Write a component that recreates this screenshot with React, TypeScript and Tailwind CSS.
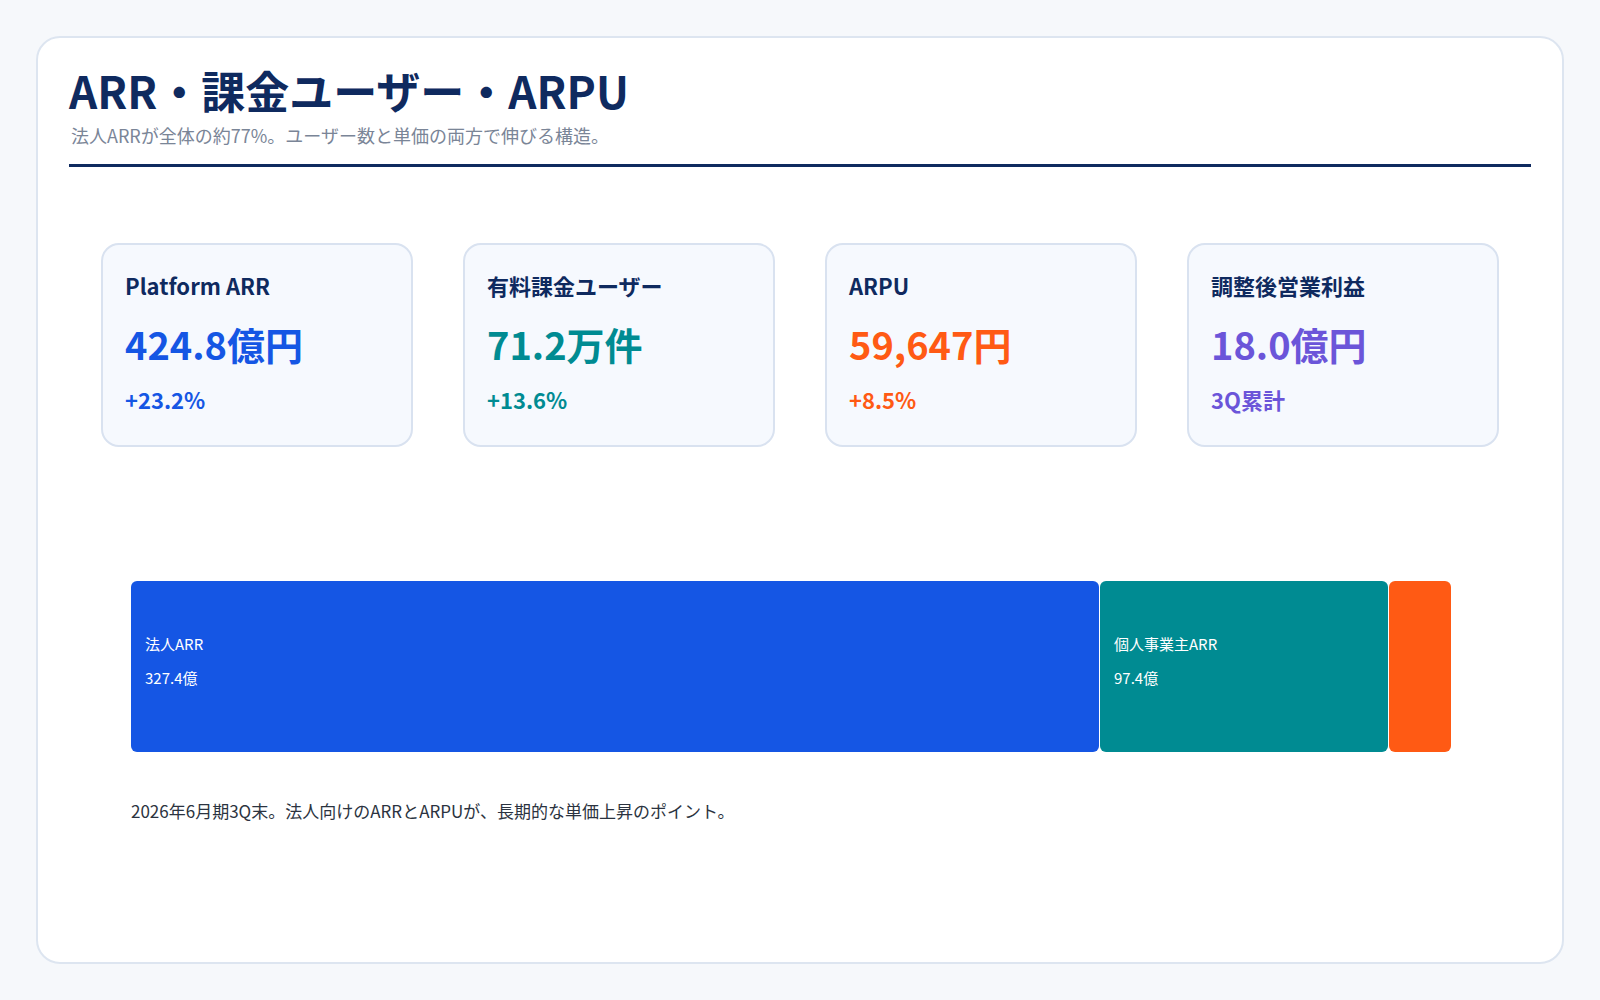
export default function App() {
  const cards = [
    { l: "Platform ARR", v: "424.8億円", c: "+23.2%", col: "text-[#1556e4]" },
    { l: "有料課金ユーザー", v: "71.2万件", c: "+13.6%", col: "text-[#008b92]" },
    { l: "ARPU", v: "59,647円", c: "+8.5%", col: "text-[#ff5a14]" },
    { l: "調整後営業利益", v: "18.0億円", c: "3Q累計", col: "text-[#6b55d9]" },
  ];
  return (
    <div className="w-[1600px] h-[1000px] bg-[#f6f8fb] p-[36px]" style={{ fontFamily: '"Noto Sans CJK JP", "Noto Sans", sans-serif' }}>
      <div className="h-full bg-white border-2 border-[#dde5f0] rounded-[24px] px-[31px] pt-[24px]">
        <h1 className="text-[44px] font-bold leading-[56px] text-[#0f2a5f]">ARR・課金ユーザー・ARPU</h1>
        <p className="text-[18px] leading-[26px] text-[#7a8597] mt-[4px] ml-[2px]">法人ARRが全体の約77%。ユーザー数と単価の両方で伸びる構造。</p>
        <div className="h-[3px] bg-[#0f2a5f] mt-[16px]" />
        <div className="grid grid-cols-4 gap-[50px] mx-[32px] mt-[76px]">
          {cards.map((k) => (
            <div key={k.l} className="h-[204px] bg-[#f6f9fe] border-2 border-[#d9e2f0] rounded-[18px] px-[22px] pt-[24px]">
              <div className="text-[22px] font-bold text-[#0f2a5f] leading-[32px]">{k.l}</div>
              <div className={`text-[38px] font-bold leading-[50px] mt-[18px] ${k.col}`}>{k.v}</div>
              <div className={`text-[22px] font-bold leading-[32px] mt-[14px] ${k.col}`}>{k.c}</div>
            </div>
          ))}
        </div>
        <div className="flex gap-[1px] ml-[62px] mr-[80px] mt-[134px] h-[171px] text-white text-[15px]">
          <div className="w-[968px] bg-[#1556e4] rounded-[6px] px-[14px] pt-[46px] leading-[34px]">
            <div>法人ARR</div><div>327.4億</div>
          </div>
          <div className="w-[288px] bg-[#008b92] rounded-[6px] px-[14px] pt-[46px] leading-[34px]">
            <div>個人事業主ARR</div><div>97.4億</div>
          </div>
          <div className="flex-1 bg-[#ff5a14] rounded-[6px]" />
        </div>
        <p className="ml-[62px] mt-[46px] text-[17px] text-[#2b3340]">2026年6月期3Q末。法人向けのARRとARPUが、長期的な単価上昇のポイント。</p>
      </div>
    </div>
  );
}
